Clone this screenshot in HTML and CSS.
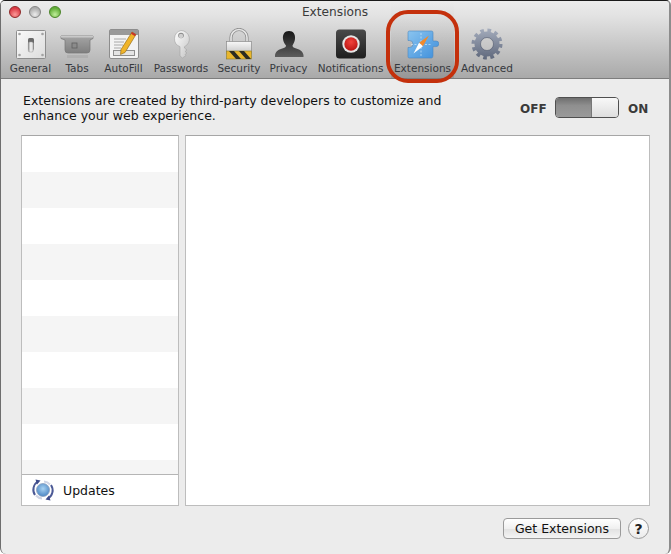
FILE: index.html
```html
<!DOCTYPE html>
<html lang="en">
<head>
<meta charset="utf-8">
<title>Extensions</title>
<link rel="stylesheet" href="styles.css">
</head>
<body>
<div class="window">
  <header class="toolbar">
    <div class="titlebar">
      <div class="lights">
        <span class="light light-red"></span>
        <span class="light light-gray"></span>
        <span class="light light-green"></span>
      </div>
      <div class="title">Extensions</div>
    </div>
    <nav class="tabs">
      <div class="tab">
        <svg class="icon" width="32" height="32" viewBox="0 0 32 32">
          <defs><linearGradient id="plate" x1="0" y1="0" x2="1" y2="1"><stop offset="0" stop-color="#fafafa"/><stop offset="1" stop-color="#dcdcdc"/></linearGradient><linearGradient id="togg" x1="0" y1="0" x2="1" y2="0"><stop offset="0" stop-color="#9a9a9a"/><stop offset=".5" stop-color="#f4f4f4"/><stop offset="1" stop-color="#c4c4c4"/></linearGradient></defs>
          <rect x="1.500" y="2.500" width="29" height="28" rx="1" fill="url(#plate)" stroke="#8d8d8d"/>
          <g fill="#a2a2a2"><circle cx="4.500" cy="6" r="1.300"/><circle cx="27.500" cy="6" r="1.300"/><circle cx="4.500" cy="27" r="1.300"/><circle cx="27.500" cy="27" r="1.300"/></g>
          <rect x="13" y="10" width="6" height="12" rx="1.500" fill="#6a6a6a"/>
          <rect x="13.300" y="14" width="5" height="10" rx="1.500" fill="url(#togg)" stroke="#a0a0a0" stroke-width=".5"/>
        </svg>
        <span class="label">General</span>
      </div>
      <div class="tab">
        <svg class="icon" width="34" height="32" viewBox="0 0 34 32">
          <defs><linearGradient id="tabg" x1="0" y1="0" x2="0" y2="1"><stop offset="0" stop-color="#a5a5a5"/><stop offset="1" stop-color="#7f7f7f"/></linearGradient></defs>
          <path d="M1 8h32v2.500l-3 1.500v10q0 3-3 3H8q-3 0-3-3V12l-4-1.500z" fill="url(#tabg)" stroke="#777" stroke-width=".7"/>
          <rect x="1" y="8" width="32" height="1.500" fill="#c9c9c9"/>
          <rect x="12" y="15" width="5" height="5" fill="#8b8b8b" stroke="#5f5f5f" stroke-width=".8"/>
          <rect x="7" y="27" width="21" height="3" fill="#a3a3a3" opacity=".5"/>
        </svg>
        <span class="label">Tabs</span>
      </div>
      <div class="tab">
        <svg class="icon" width="32" height="32" viewBox="0 0 32 32">
          <rect x="1.500" y="1.500" width="29" height="29" rx="1.500" fill="#f3f3f3" stroke="#8d8d8d"/>
          <rect x="2" y="2" width="28" height="5" fill="#9a9a9a"/>
          <g stroke="#a8a8a8" stroke-width="1"><path d="M6 11h12M6 14h10M6 17h9M6 20h7"/></g>
          <rect x="5.500" y="22.500" width="21" height="5" fill="#e4e4e4" stroke="#8f8f8f"/>
          <path d="M24 4l4 2.500-11 18-4.500 2 .5-5z" fill="#f0b429" stroke="#8a6210" stroke-width=".6"/>
          <path d="M24 4l4 2.500-1 1.700-4-2.500z" fill="#c8332c"/>
        </svg>
        <span class="label">AutoFill</span>
      </div>
      <div class="tab">
        <svg class="icon" width="32" height="32" viewBox="0 0 32 32">
          <defs><linearGradient id="keyg" x1="0" y1="0" x2="1" y2="1"><stop offset="0" stop-color="#ffffff"/><stop offset="1" stop-color="#c4c4c4"/></linearGradient></defs>
          <path d="M16 2.500a8.500 8.500 0 0 1 3.500 16.200v1.300l2.500 2-2 1.500 2 1.500-2 1.500 1 1-3.500 2.500-2.500-2V18.700A8.500 8.500 0 0 1 16 2.500z" fill="url(#keyg)" stroke="#a2a2a2" stroke-width=".6"/>
          <circle cx="16" cy="7.500" r="2.800" fill="#8a8a8a"/>
          <circle cx="16" cy="8" r="2.200" fill="#cfcfcf"/>
        </svg>
        <span class="label">Passwords</span>
      </div>
      <div class="tab">
        <svg class="icon" width="32" height="32" viewBox="0 0 32 32">
          <defs><linearGradient id="lockg" x1="0" y1="0" x2="0" y2="1"><stop offset="0" stop-color="#f8f8f8"/><stop offset="1" stop-color="#c6c6c6"/></linearGradient></defs>
          <path d="M8 15V9.500a8 8 0 0 1 16 0V15" fill="none" stroke="#8f8f8f" stroke-width="3.200"/>
          <path d="M8 15V9.500a8 8 0 0 1 16 0V15" fill="none" stroke="#e6e6e6" stroke-width="1.600"/>
          <rect x="3.500" y="13.500" width="25" height="12" fill="url(#lockg)" stroke="#8a8a8a" stroke-width=".7"/>
          <rect x="3.500" y="23" width="25" height="8" fill="#e9b62c" stroke="#8a7a2a" stroke-width=".6"/>
          <path d="M6 23h5l7 8h-5zM16 23h5l7 8h-5z" fill="#2b2b20"/>
        </svg>
        <span class="label">Security</span>
      </div>
      <div class="tab">
        <svg class="icon" width="32" height="32" viewBox="0 0 32 32">
          <defs><linearGradient id="privg" x1="0" y1="0" x2="0" y2="1"><stop offset="0" stop-color="#171717"/><stop offset="1" stop-color="#5c5c5c"/></linearGradient></defs>
          <path d="M16 3c4.500 0 6.500 3.500 6 8-.3 3-1.700 5-2.500 6.500 0 1.500 1 2 3 2.800 4 1.200 7 2.500 8 6.700V29H2v-2c1-4.200 4-5.500 8-6.700 2-.8 3-1.300 3-2.800C11.700 16 10.300 14 10 11c-.5-4.500 1.500-8 6-8z" fill="url(#privg)"/>
        </svg>
        <span class="label">Privacy</span>
      </div>
      <div class="tab">
        <svg class="icon" width="32" height="32" viewBox="0 0 32 32">
          <defs><linearGradient id="notg" x1="0" y1="0" x2="0" y2="1"><stop offset="0" stop-color="#4a4a4a"/><stop offset="1" stop-color="#1e1e1e"/></linearGradient><radialGradient id="redg" cx=".5" cy=".35" r=".7"><stop offset="0" stop-color="#f2433c"/><stop offset="1" stop-color="#b6110f"/></radialGradient></defs>
          <rect x="1" y="1.500" width="30" height="29" rx="3.500" fill="url(#notg)"/>
          <circle cx="16" cy="16" r="8.700" fill="#e6e6e6"/>
          <circle cx="16" cy="16" r="6.700" fill="url(#redg)"/>
        </svg>
        <span class="label">Notifications</span>
      </div>
      <div class="tab tab-active">
        <svg class="icon" width="32" height="32" viewBox="0 0 32 32">
          <defs><linearGradient id="pzg" x1="0" y1="0" x2="1" y2="1"><stop offset="0" stop-color="#8ac4ef"/><stop offset="1" stop-color="#3d8edb"/></linearGradient></defs>
          <path d="M1 4.500Q1 3 2.500 3h22Q26 3 26 4.500V13h3a2.800 2.800 0 0 1 0 5.600H26v9Q26 30 24.500 30h-22Q1 30 1 28.500V19.500h1.500a3.500 3.500 0 0 0 0-7H1z" fill="url(#pzg)" stroke="#4a87c0" stroke-width=".6"/>
          <g stroke="#e2f1fc" stroke-width=".8" fill="none" opacity=".75" stroke-dasharray="2 1.500"><path d="M14 5v23M4 16.500h21"/></g>
          <path d="M22 7.500L12.100 14.800l3.800 3.400z" fill="#f08a2c"/>
          <path d="M6.500 25.500L12.100 14.800l3.800 3.400z" fill="#ffffff"/>
        </svg>
        <span class="label">Extensions</span>
      </div>
      <div class="tab">
        <svg class="icon" width="32" height="32" viewBox="0 0 32 32">
          <defs><linearGradient id="gearg" gradientUnits="userSpaceOnUse" x1="0" y1="0" x2="0" y2="32"><stop offset="0" stop-color="#a5adbd"/><stop offset="1" stop-color="#5d667a"/></linearGradient></defs>
          <circle cx="16" cy="16" r="13.500" fill="none" stroke="url(#gearg)" stroke-width="4" stroke-dasharray="3.600 3.470"/>
          <circle cx="16" cy="16" r="9.500" fill="none" stroke="url(#gearg)" stroke-width="6"/>
          <circle cx="16" cy="16" r="6.500" fill="none" stroke="#4f586b" stroke-width=".6"/>
        </svg>
        <span class="label">Advanced</span>
      </div>
    </nav>
  </header>

  <main class="content">
    <div class="intro">
      <p class="intro-text">Extensions are created by third-party developers to customize and<br>enhance your web experience.</p>
      <div class="switch-group">
        <span class="switch-label">OFF</span>
        <div class="switch"><span class="switch-off"></span><span class="switch-knob"></span></div>
        <span class="switch-label">ON</span>
      </div>
    </div>
    <div class="panels">
      <aside class="sidebar">
        <div class="list"></div>
        <div class="updates">
          <svg class="updates-icon" width="24" height="24" viewBox="0 0 24 24">
            <defs><radialGradient id="updg" cx=".5" cy=".4" r=".6"><stop offset="0" stop-color="#a8d2f2"/><stop offset="1" stop-color="#4b86c4"/></radialGradient></defs>
            <circle cx="12" cy="12" r="6.500" fill="url(#updg)" stroke="#8b9fbf" stroke-width=".8"/>
            <path d="M4 17A9.500 9.500 0 0 1 7 3.500" fill="none" stroke="#4c5a96" stroke-width="2"/>
            <path d="M20 7a9.500 9.500 0 0 1-3 13.500" fill="none" stroke="#4c5a96" stroke-width="2"/>
            <path d="M13 3.500a9 9 0 0 1 6 3M11 20.500a9 9 0 0 1-6-3" fill="none" stroke="#d0d4e4" stroke-width="2"/>
            <path d="M4.500 1.500l5 1-3.500 4zM19.500 22.500l-5-1 3.500-4z" fill="#3c4a8a"/>
          </svg>
          <span class="updates-label">Updates</span>
        </div>
      </aside>
      <section class="detail"></section>
    </div>
    <footer class="footer">
      <button class="btn" type="button">Get Extensions</button>
      <button class="help" type="button">?</button>
    </footer>
  </main>
  <div class="ring"></div>
</div>
</body>
</html>
```

FILE: styles.css
```css
* { box-sizing: border-box; }
html, body { margin: 0; padding: 0; background: #fff; }
body { width: 671px; height: 554px; overflow: hidden; font-family: "DejaVu Sans", "Liberation Sans", sans-serif; }

.window {
  position: relative;
  width: 671px;
  height: 554px;
  display: flex;
  flex-direction: column;
  background: #ececec;
  border-top: 1px solid #1a1a1a;
  border-left: 1px solid #6e6e6e;
  border-right: 2px solid #8c8c8c;
  border-radius: 5px 5px 6px 6px;
}

.toolbar {
  height: 78px;
  flex: none;
  display: flex;
  flex-direction: column;
  background: linear-gradient(#ececec, #e2e2e2 20%, #a9a9a9);
  border-bottom: 1px solid #7d7d7d;
  border-radius: 4px 4px 0 0;
}

.titlebar {
  height: 21px;
  flex: none;
  display: grid;
  grid-template-columns: 1fr auto 1fr;
  align-items: center;
}
.lights { display: flex; gap: 8px; padding-left: 8px; }
.light { width: 12px; height: 12px; border-radius: 50%; border: 1px solid #777; }
.light-red { background: radial-gradient(circle at 50% 75%, #fb9a98, #da3a44 70%); border-color: #8e2828; }
.light-gray { background: radial-gradient(circle at 50% 75%, #ececec, #acacac 70%); border-color: #848484; }
.light-green { background: radial-gradient(circle at 50% 75%, #c0ee9a, #62ad38 70%); border-color: #4a8428; }
.title { font-size: 12.200px; color: #3a3a3a; }

.tabs {
  flex: 1;
  display: grid;
  grid-template-columns: 49px 44px 49px 66px 50px 49px 75px 69px 60px;
  padding-left: 5px;
}
.tab {
  display: flex;
  flex-direction: column;
  align-items: center;
  padding-top: 6px;
}
.tab-active {
  margin: -20px 3px 0;
  padding-top: 26px;
  background: linear-gradient(rgba(0,0,0,0), rgba(0,0,0,.11));
}
.icon { flex: none; display: block; }
.label { margin-top: 2px; font-size: 10.500px; line-height: 13px; color: #36393e; white-space: nowrap; }

.content {
  flex: 1;
  display: flex;
  flex-direction: column;
  padding: 0 19px 0 20px;
}
.intro {
  height: 56px;
  flex: none;
  display: flex;
  align-items: center;
  justify-content: space-between;
  padding: 0 0 0 2px;
}
.intro-text { margin: 1px 0 0; font-size: 12.500px; line-height: 15px; color: #111; }
.switch-group { display: flex; align-items: center; gap: 10px; margin-top: 1px; margin-right: 2px; }
.switch-label { padding-top: 2px; font-size: 12px; font-weight: 700; color: #3a3a3a; width: 25px; }
.switch-label:last-child { width: 20px; margin-left: -1px; }
.switch {
  width: 64px;
  height: 21px;
  display: flex;
  border: 1px solid #4f4f4f;
  border-radius: 4px;
  overflow: hidden;
}
.switch-off { width: 35px; background: linear-gradient(#6f6f6f, #8f8f8f 40%, #9a9a9a); }
.switch-knob { flex: 1; border-left: 1px solid #777; background: linear-gradient(#f8f8f8, #dedede); }

.panels { height: 371px; flex: none; display: flex; gap: 6px; }
.sidebar {
  width: 158px;
  display: flex;
  flex-direction: column;
  background: #fff;
  border: 1px solid #bdbdbd;
  border-top-color: #a6a6a6;
}
.list {
  flex: 1;
  background: repeating-linear-gradient(#fff 0 36px, #f5f5f5 36px 72px);
}
.updates {
  height: 31px;
  flex: none;
  display: flex;
  align-items: center;
  gap: 8px;
  padding-left: 9px;
  border-top: 1px solid #b5b5b5;
}
.updates-icon { flex: none; }
.updates-label { font-size: 12.500px; color: #111; }
.detail {
  flex: 1;
  background: #fff;
  border: 1px solid #bdbdbd;
  border-top-color: #a6a6a6;
}

.footer {
  flex: 1;
  display: flex;
  justify-content: flex-end;
  align-items: flex-start;
  gap: 7px;
  padding: 12px 1px 0 0;
}
.btn {
  width: 118px;
  height: 21px;
  padding: 0;
  font: 12.500px "DejaVu Sans", "Liberation Sans", sans-serif;
  color: #111;
  background: linear-gradient(#fff, #f0f0f0 50%, #e3e3e3 55%, #f4f4f4);
  border: 1px solid #9a9a9a;
  border-radius: 4px;
}
.help {
  width: 21px;
  height: 21px;
  padding: 0;
  font: 700 14px "DejaVu Sans", "Liberation Sans", sans-serif;
  color: #222;
  background: linear-gradient(#fff, #ececec);
  border: 1px solid #9a9a9a;
  border-radius: 50%;
}

.ring {
  position: absolute;
  left: 385px;
  top: 9px;
  width: 73px;
  height: 73px;
  border: 4px solid #c4300c;
  border-radius: 22px;
}
```
